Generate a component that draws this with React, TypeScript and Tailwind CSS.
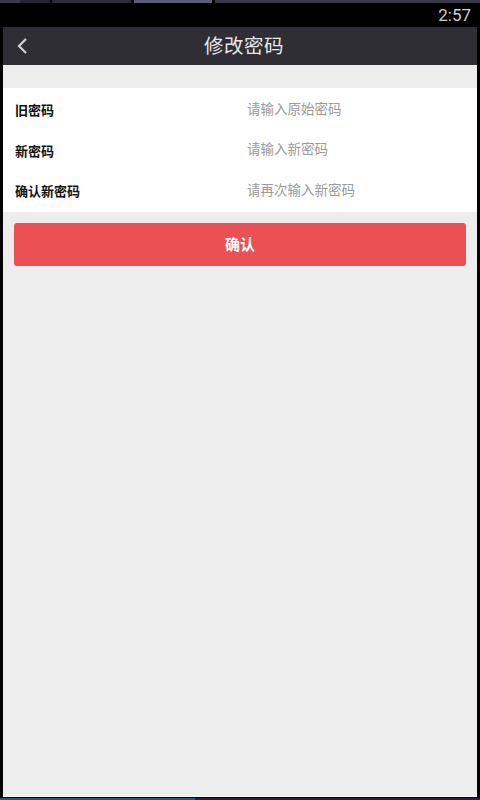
export default function App() {
  const rows = [
    { label: '旧密码', hint: '请输入原始密码', h: 'h-[40px]' },
    { label: '新密码', hint: '请输入新密码', h: 'h-[41px]' },
    { label: '确认新密码', hint: '请再次输入新密码', h: 'h-[40px]' },
  ]

  return (
    <div
      className="w-[480px] h-[800px] bg-black flex flex-col overflow-hidden"
      style={{ fontFamily: '"Noto Sans", "Noto Sans CJK SC", sans-serif' }}
    >
      {/* window strip */}
      <div className="h-[3px] flex shrink-0">
        <div className="w-[20px] bg-[#3b3a4c]" />
        <div className="w-[30px] bg-[#26252f]" />
        <div className="w-[2px] bg-black" />
        <div className="w-[79px] bg-[#2c2b38]" />
        <div className="w-[3px] bg-black" />
        <div className="w-[78px] bg-[#5d5c78]" />
        <div className="w-[3px] bg-black" />
        <div className="flex-1 bg-[#3b3949]" />
      </div>

      {/* status bar */}
      <div className="h-[24px] shrink-0 flex items-center justify-end pr-[9px]">
        <span className="text-[17px] text-[#cfcfcf] leading-none" style={{ fontFamily: 'Roboto, sans-serif' }}>
          2:57
        </span>
      </div>

      <div className="flex-1 flex flex-col px-[3px]">
        {/* nav bar */}
        <div className="h-[38px] shrink-0 bg-[#2f2e35] relative flex items-center justify-center pl-[8px]">
          <svg className="absolute left-[13px] top-[10px]" width="14" height="18" viewBox="0 0 14 18">
            <path d="M10 2 L3 9 L10 16" fill="none" stroke="#d0d0d0" strokeWidth="2.2" />
          </svg>
          <span className="text-[19.5px] text-[#e6e6e6] tracking-[0.5px]">修改密码</span>
        </div>

        <div className="flex-1 bg-[#ededed] flex flex-col">
          <div className="h-[23px] shrink-0" />
          <div className="bg-white pt-[3px] shrink-0">
            {rows.map((r) => (
              <div key={r.label} className={`${r.h} flex items-center`}>
                <span className="w-[244px] pl-[12px] text-[13px] font-bold text-[#111]">{r.label}</span>
                <span className="-mt-[4px] text-[13.5px] text-[#9a9a9a]">{r.hint}</span>
              </div>
            ))}
          </div>
          <div className="px-[11px] pt-[11px]">
            <button className="w-full h-[43px] rounded-[3px] bg-[#eb5055] text-white text-[15px] font-bold">
              确认
            </button>
          </div>
          <div className="flex-1" />
          <div className="h-px bg-[#fafafa]" />
        </div>
      </div>

      <div className="h-px shrink-0 bg-black" />
      <div className="h-[2px] shrink-0 flex">
        <div className="w-[195px] bg-[#2a5773]" />
        <div className="flex-1 bg-[#2b2234]" />
      </div>
    </div>
  )
}
